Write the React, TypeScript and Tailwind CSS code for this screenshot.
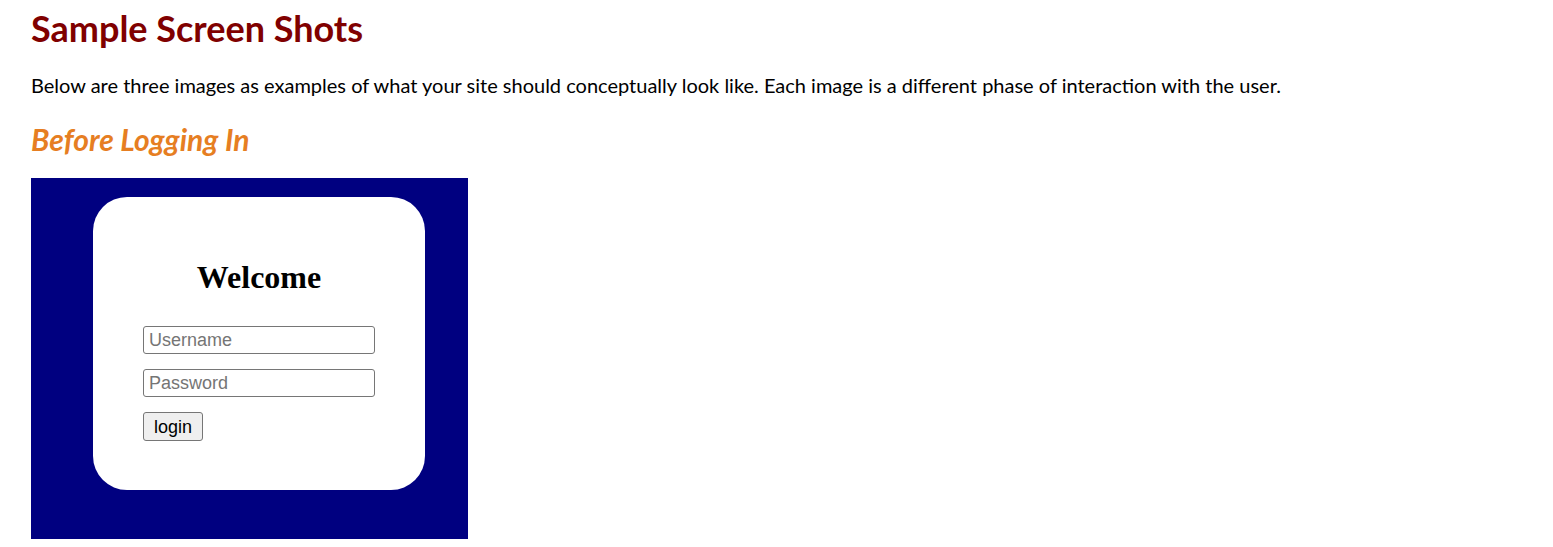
import React from "react";

const LoginShot: React.FC = () => {
  return (
    <div className="w-[437px] h-[361px] bg-[#000080] pt-[19px] pl-[62px]">
      <div className="w-[332px] h-[293px] bg-white rounded-[34px] flex flex-col items-start pl-[50px] pt-[64px]">
        <div
          className="w-[232px] text-center text-[32px] font-bold text-black leading-none"
          style={{ fontFamily: '"Liberation Serif", "Times New Roman", serif' }}
        >
          Welcome
        </div>
        <div
          className="mt-[33px] flex flex-col gap-[15px]"
          style={{ fontFamily: '"Liberation Sans", Arial, sans-serif' }}
        >
          <input
            placeholder="Username"
            className="w-[232px] h-[28px] border border-[#767676] rounded-[3px] px-[5px] text-[18px] placeholder:text-[#757575] outline-none"
          />
          <input
            placeholder="Password"
            type="password"
            className="w-[232px] h-[28px] border border-[#767676] rounded-[3px] px-[5px] text-[18px] placeholder:text-[#757575] outline-none"
          />
          <div>
            <button className="h-[29px] px-[10px] border border-[#767676] rounded-[3px] bg-[#efefef] text-[18px] leading-none text-black">
              login
            </button>
          </div>
        </div>
      </div>
    </div>
  );
};

export default function App() {
  return (
    <div className="bg-white min-h-screen px-[31px]" style={{ fontFamily: "Lato, sans-serif" }}>
      <h1 className="pt-[6px] text-[36px] font-bold text-[#800000] leading-[44px]">Sample Screen Shots</h1>
      <p className="mt-[21px] text-[20px] text-black leading-[28px]">
        Below are three images as examples of what your site should conceptually look like. Each image is a different phase of interaction with the user.
      </p>
      <h2 className="mt-[21px] text-[30px] font-bold italic text-[#e67e22] leading-[38px]">Before Logging In</h2>
      <div className="mt-[20px]">
        <LoginShot />
      </div>
    </div>
  );
}
